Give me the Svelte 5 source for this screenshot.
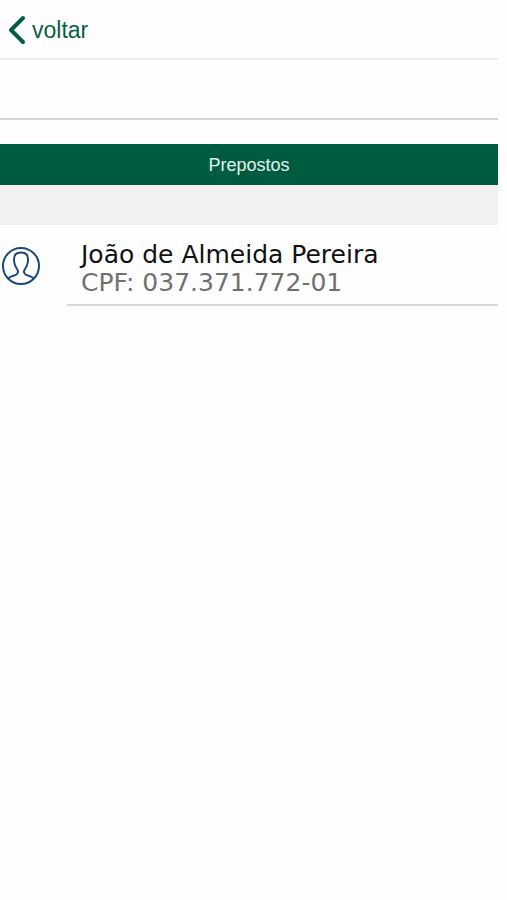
<script lang="ts">
  interface Preposto {
    nome: string;
    cpf: string;
  }

  let prepostos: Preposto[] = $state([
    { nome: 'João de Almeida Pereira', cpf: '037.371.772-01' }
  ]);

  function voltar() {
    history.back();
  }
</script>

<div class="screen">
  <header class="topbar">
    <button class="back" onclick={voltar}>
      <svg class="chevron" viewBox="0 0 18 30" aria-hidden="true">
        <path d="M15 3 3 15l12 12" />
      </svg>
      voltar
    </button>
  </header>

  <div class="subbar"></div>

  <main>
    <h1>Prepostos</h1>
    <div class="divider"></div>
    <ul>
      {#each prepostos as preposto (preposto.cpf)}
        <li>
          <svg class="avatar" viewBox="0 0 38 38" aria-hidden="true">
            <circle cx="19" cy="19" r="18" />
            <path
              d="M6.5 31.5C8 29 12 29 14.5 27.5 16.5 26 16 23.5 15 22 13 19.500 12.500 18 12 14 11.500 8 14 5.500 19 5.500S26.500 8 26 14C25.500 18 25 19.500 23 22 22 23.500 21.500 26 23.500 27.500 26 29 30 29 31.500 31.500"
            />
          </svg>
          <div class="info">
            <span class="nome">{preposto.nome}</span>
            <span class="cpf">CPF: {preposto.cpf}</span>
          </div>
        </li>
      {/each}
    </ul>
  </main>
</div>

<style>
  :global(body) {
    background-color: #fefefe;
  }

  .screen {
    margin-right: 9px;
    font-family: 'Liberation Sans', Arial, sans-serif;
  }

  .topbar {
    display: flex;
    align-items: center;
    height: 58px;
    padding: 0 8px;
    border-bottom: 2px solid #ededed;
  }

  .back {
    display: flex;
    align-items: center;
    gap: 6px;
    padding: 2px 0 0;
    border: 0;
    background: none;
    color: #0b5f45;
    font-family: inherit;
    font-size: 23px;
    line-height: 28px;
    cursor: pointer;
  }

  .chevron {
    width: 18px;
    height: 30px;
    fill: none;
    stroke: #045c40;
    stroke-width: 4;
    stroke-linecap: round;
    stroke-linejoin: round;
  }

  .subbar {
    height: 58px;
    border-bottom: 2px solid #d4d4d4;
  }

  h1 {
    margin: 24px 0 0;
    padding-top: 2px;
    background-color: #005c40;
    color: #e3f1ec;
    font-size: 18px;
    font-weight: normal;
    line-height: 39px;
    text-align: center;
  }

  .divider {
    height: 40px;
    background-color: #f1f1f1;
  }

  ul {
    margin: 0;
    padding: 0;
    list-style: none;
  }

  li {
    display: flex;
    align-items: center;
    gap: 27px;
  }

  .avatar {
    flex: none;
    width: 38px;
    height: 38px;
    margin-left: 2px;
    fill: none;
    stroke: #1d4a75;
    stroke-width: 2;
    stroke-linejoin: round;
  }

  .info {
    display: flex;
    flex: 1;
    flex-direction: column;
    padding: 16px 0 7px 14px;
    border-bottom: 2px solid #d9d9d9;
    font-family: 'DejaVu Sans', Verdana, sans-serif;
    font-size: 25px;
    line-height: 28px;
  }

  .nome {
    color: #111;
  }

  .cpf {
    color: #707070;
  }
</style>
